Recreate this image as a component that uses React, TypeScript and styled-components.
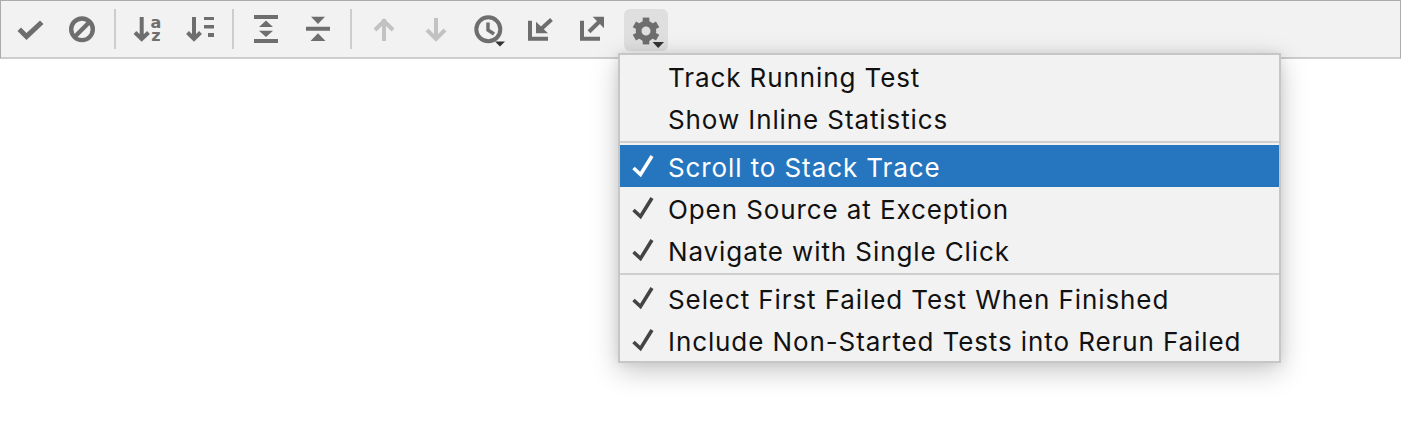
import React from "react";
import styled, { createGlobalStyle } from "styled-components";

const Global = createGlobalStyle`
  html, body { margin: 0; padding: 0; background: #fff; }
  body { width: 1401px; height: 440px; overflow: hidden; font-family: Inter, "Liberation Sans", sans-serif; }
`;

const Page = styled.div`
  position: relative;
  width: 1401px;
  height: 440px;
  background: #fff;
`;

const Toolbar = styled.div`
  box-sizing: border-box;
  display: flex;
  align-items: flex-start;
  gap: 8px;
  width: 1401px;
  height: 59px;
  padding: 8px 0 0 7px;
  background: #f2f2f2;
  border-top: 1px solid #ababab;
  border-left: 1px solid #ababab;
  border-right: 1px solid #ababab;
  border-bottom: 2px solid #cdcdcd;
`;

const ToolButton = styled.div<{ $active?: boolean }>`
  flex: none;
  width: 44px;
  height: 42px;
  border-radius: 6px;
  background: ${(p) => (p.$active ? "#dfdfdf" : "transparent")};
  margin-left: ${(p) => (p.$active ? "2px" : "0")};
  svg { display: block; }
`;

const ToolSep = styled.div`
  flex: none;
  width: 2px;
  height: 40px;
  margin: 0 2px;
  background: #cdcdcd;
`;

const Menu = styled.div`
  position: absolute;
  left: 618px;
  top: 53px;
  box-sizing: border-box;
  width: 663px;
  height: 310px;
  background: #f2f2f2;
  border: 2px solid #c6c6c6;
  box-shadow: 0 8px 26px rgba(0, 0, 0, 0.22), 0 0 10px rgba(0, 0, 0, 0.08);
`;

const Row = styled.div<{ $selected?: boolean }>`
  display: flex;
  align-items: center;
  height: 42px;
  background: ${(p) => (p.$selected ? "#2675bf" : "transparent")};
  color: ${(p) => (p.$selected ? "#fff" : "#111")};
`;

const Label = styled.span`
  padding-top: 2px;
  font-size: 26px;
  letter-spacing: 0.9px;
  white-space: nowrap;
`;

const CheckCell = styled.span`
  flex: none;
  width: 48px;
  height: 42px;
  svg { display: block; }
`;

const MenuSep = styled.div<{ $before: number; $after: number }>`
  height: 2px;
  margin-top: ${(p) => p.$before}px;
  margin-bottom: ${(p) => p.$after}px;
  background: #cfcfcf;
`;

const G = "#6e6e6e";
const D = "#c2c2c2";
const T = "#333";

const Icon = ({ children }: { children: React.ReactNode }) => (
  <svg width="44" height="42" viewBox="-22 -21 44 42" fill="none">
    {children}
  </svg>
);

const Tick = ({ color }: { color: string }) => (
  <svg width="48" height="42" viewBox="0 0 48 42" fill="none">
    <path d="M13.5 23 L20.5 29.5 L32 11" stroke={color} strokeWidth="3.6" />
  </svg>
);

const Arrow = ({ x, color, up }: { x: number; color: string; up?: boolean }) =>
  up ? (
    <path d={`M${x} 11V-11M${x - 9} 0L${x} -9L${x + 9} 0`} stroke={color} strokeWidth="4" />
  ) : (
    <path d={`M${x} -12V8M${x - 9} 0L${x} 9L${x + 9} 0`} stroke={color} strokeWidth="4" />
  );

const Gear = () => (
  <>
    <circle cx="0" cy="1" r="7.4" stroke={G} strokeWidth="5.8" />
    {[0, 60, 120, 180, 240, 300].map((a) => (
      <rect key={a} x="-3.3" y="-12.4" width="6.6" height="5.4" fill={G} transform={`rotate(${a} 0 1)`} />
    ))}
    <path d="M6.5 12H18L12.2 18Z" fill={T} />
  </>
);

const icons: React.ReactNode[] = [
  <path key="c" d="M-12.5 1L-9 -2.5L-3.5 3L10 -9.5L13.5 -6L-3.5 10Z" fill={G} />,
  <g key="b" stroke={G} strokeWidth="4.4">
    <circle cx="0" cy="-0.7" r="10.8" />
    <path d="M-7.5 7L7.5 -8" />
  </g>,
  null,
  <g key="az">
    <path d="M-6.3 -13V8M-13 2.5L-6.3 9L0.5 2.5" stroke={G} strokeWidth="4" />
    <text x="8" y="-2" textAnchor="middle" fontFamily="'DejaVu Sans', sans-serif" fontWeight="700" fontSize="16" fill={G}>a</text>
    <text x="8" y="11" textAnchor="middle" fontFamily="'DejaVu Sans', sans-serif" fontWeight="700" fontSize="16" fill={G}>z</text>
  </g>,
  <g key="s">
    <path d="M-6 -13V8M-12.5 2.5L-6 9L0.5 2.5" stroke={G} strokeWidth="4" />
    <path d="M4 -13H14V-10H4ZM4 -5H14V-1.5H4ZM8 3H14V7H8Z" fill={G} />
  </g>,
  null,
  <path key="e" d="M-12 -15H12V-11H-12ZM-12 9H12V13H-12ZM0 -9.5L7 -3H-7ZM-7 0.7H7L0 7Z" fill={G} />,
  <path key="f" d="M-12 -3.3H12V0.7H-12ZM-7 -13.3H7L0 -6ZM0 3.3L7.5 11H-7.5Z" fill={G} />,
  null,
  <Arrow key="u" x={0} color={D} up />,
  <Arrow key="d" x={0} color={D} />,
  <g key="h">
    <circle cx="0.3" cy="-0.7" r="12" stroke={G} strokeWidth="4" />
    <path d="M0 -7.5V0L6 4" stroke={G} strokeWidth="3.4" />
    <path d="M7 11.5H17L12 16.5Z" fill={T} />
  </g>,
  <g key="i">
    <path d="M-10 -9.3V8.7H8" stroke={G} strokeWidth="4" />
    <path d="M-4 -8.3V3.3H8Z" fill={G} />
    <path d="M0 0L11.5 -10.5" stroke={G} strokeWidth="4" />
  </g>,
  <g key="x">
    <path d="M-10 -9.3V8.7H8" stroke={G} strokeWidth="4" />
    <path d="M12 -13.3H0.7L12 -1.7Z" fill={G} />
    <path d="M-3 1.7L7 -8" stroke={G} strokeWidth="4" />
  </g>,
];

type Item = { label: string; checked?: boolean; selected?: boolean };

const Group = ({ items }: { items: Item[] }) => (
  <>
    {items.map((it) => (
      <Row key={it.label} $selected={it.selected}>
        <CheckCell>{it.checked && <Tick color={it.selected ? "#fff" : "#444"} />}</CheckCell>
        <Label>{it.label}</Label>
      </Row>
    ))}
  </>
);

export default function App() {
  return (
    <Page>
      <Global />
      <Toolbar>
        {icons.map((icon, i) =>
          icon === null ? (
            <ToolSep key={i} />
          ) : (
            <ToolButton key={i}>
              <Icon>{icon}</Icon>
            </ToolButton>
          )
        )}
        <ToolButton $active>
          <Icon>
            <Gear />
          </Icon>
        </ToolButton>
      </Toolbar>
      <Menu>
        <Group items={[{ label: "Track Running Test" }, { label: "Show Inline Statistics" }]} />
        <MenuSep $before={2} $after={2} />
        <Group
          items={[
            { label: "Scroll to Stack Trace", checked: true, selected: true },
            { label: "Open Source at Exception", checked: true },
            { label: "Navigate with Single Click", checked: true },
          ]}
        />
        <MenuSep $before={2} $after={2} />
        <Group
          items={[
            { label: "Select First Failed Test When Finished", checked: true },
            { label: "Include Non-Started Tests into Rerun Failed", checked: true },
          ]}
        />
      </Menu>
    </Page>
  );
}
